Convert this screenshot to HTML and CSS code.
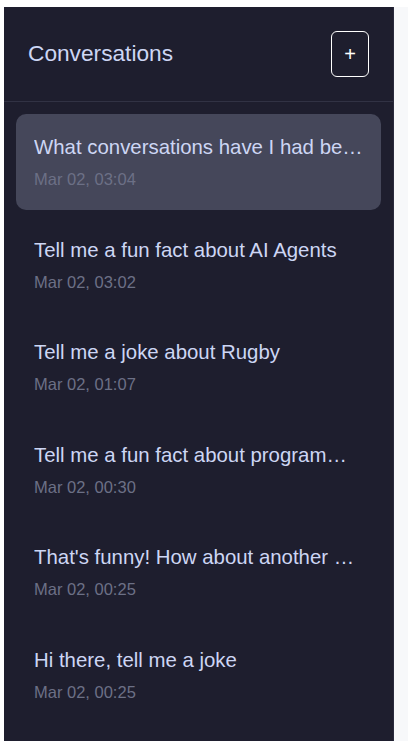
FILE: index.html
```html
<!DOCTYPE html>
<html lang="en">
<head>
<meta charset="utf-8">
<title>Conversations</title>
<link rel="stylesheet" href="styles.css">
</head>
<body>
<div class="app">
  <aside class="sidebar">
    <header class="sidebar-header">
      <h1 class="sidebar-title">Conversations</h1>
      <button class="new-btn" type="button" aria-label="New conversation">+</button>
    </header>
    <ul class="conv-list">
      <li class="conv-item active">
        <div class="conv-title">What conversations have I had before?</div>
        <div class="conv-date">Mar 02, 03:04</div>
      </li>
      <li class="conv-item">
        <div class="conv-title">Tell me a fun fact about AI Agents</div>
        <div class="conv-date">Mar 02, 03:02</div>
      </li>
      <li class="conv-item">
        <div class="conv-title">Tell me a joke about Rugby</div>
        <div class="conv-date">Mar 02, 01:07</div>
      </li>
      <li class="conv-item">
        <div class="conv-title">Tell me a fun fact about programming</div>
        <div class="conv-date">Mar 02, 00:30</div>
      </li>
      <li class="conv-item">
        <div class="conv-title">That's funny! How about another one?</div>
        <div class="conv-date">Mar 02, 00:25</div>
      </li>
      <li class="conv-item">
        <div class="conv-title">Hi there, tell me a joke</div>
        <div class="conv-date">Mar 02, 00:25</div>
      </li>
    </ul>
  </aside>
  <main class="main"></main>
</div>
</body>
</html>
```

FILE: styles.css
```css
* { box-sizing: border-box; }
html, body {
  margin: 0;
  padding: 0;
  height: 100%;
  background: #ffffff;
  font-family: "Liberation Sans", Arial, sans-serif;
}
.app {
  display: flex;
  height: 100%;
  padding: 7px 0 0 4px;
}
.sidebar {
  width: 390px;
  flex: none;
  background: #1e1e2e;
  border-right: 1px solid #2a2a3c;
  display: flex;
  flex-direction: column;
  overflow: hidden;
}
.sidebar-header {
  display: flex;
  align-items: center;
  justify-content: space-between;
  padding: 24px 24px 24px 24px;
  border-bottom: 1px solid #313244;
}
.sidebar-title {
  margin: 0;
  font-size: 22.7px;
  font-weight: 400;
  color: #cdd6f4;
  line-height: 1.2;
}
.new-btn {
  width: 38px;
  height: 46px;
  border: 1px solid #ffffff;
  border-radius: 6px;
  background: transparent;
  color: #ffffff;
  font-family: "Liberation Sans", Arial, sans-serif;
  font-size: 20px;
  line-height: 1;
  padding: 0;
  display: flex;
  align-items: center;
  justify-content: center;
}
.conv-list {
  list-style: none;
  margin: 0;
  padding: 12px 12px 12px 12px;
  display: flex;
  flex-direction: column;
  gap: 6.6px;
}
.conv-item {
  padding: 18px 18px 19px 18px;
  border-radius: 10px;
  display: flex;
  flex-direction: column;
  gap: 5px;
  min-width: 0;
}
.conv-item.active {
  background: #45475a;
}
.conv-title {
  font-size: 20.4px;
  line-height: 30px;
  color: #cdd6f4;
  white-space: nowrap;
  overflow: hidden;
  text-overflow: ellipsis;
}
.conv-date {
  font-size: 16.5px;
  line-height: 24px;
  color: #6c7086;
}
.main {
  flex: 1;
  background: #f7f8fa;
}
```
